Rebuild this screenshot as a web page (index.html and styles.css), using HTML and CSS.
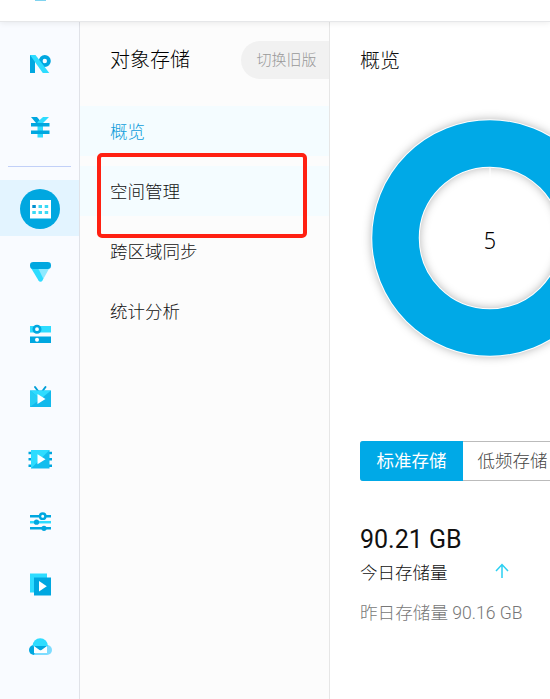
FILE: index.html
```html
<!DOCTYPE html>
<html lang="zh-CN">
<head>
<meta charset="utf-8">
<title>对象存储</title>
<link rel="stylesheet" href="styles.css">
</head>
<body>
<div class="app">
  <header class="topbar"><span class="brand"></span></header>
  <div class="body">
    <nav class="rail">
      <a class="rail-item"><svg viewBox="0 0 24 24"><path fill="#00a7e0" d="M2 3h5v18H2z"/><circle cx="16.800" cy="9" r="4.100" fill="none" stroke="#00a7e0" stroke-width="3.800"/><path fill="#2edcff" d="M2 3h5.500l13.800 18h-6.500z"/></svg></a>
      <a class="rail-item"><svg viewBox="0 0 24 24"><path fill="#00a7e0" d="M3 2h6l5 6H8z"/><path fill="#2edcff" d="M15 2h6l-6 6v14.500H9.500V7z"/><path fill="#00a7e0" d="M3 8h18.500v3.500H3zM3 15.500h18.500V19H3z"/></svg></a>
      <hr class="divider">
      <a class="rail-item active"><span class="disc"><svg viewBox="0 0 24 24"><path fill="#fff" d="M2 3h21v18.500H2z"/><path fill="#008fd0" d="M4.300 8h3.500v3H4.300z"/><path fill="#39d9f5" d="M10.500 8H14v3h-3.500zM16.700 8h3.500v3h-3.500zM4.300 14h3.500v3H4.300zM10.500 14H14v3h-3.500zM16.700 14h3.500v3h-3.500z"/></svg></span></a>
      <a class="rail-item"><svg viewBox="0 0 24 24"><path fill="#8ee9ff" d="M10 8h12l-7.500 13.500c-1 1.800-3 1.800-4 0z"/><path fill="#2edcff" d="M3 9h7l5.200 10.500c-.7 3.600-3.600 3.800-4.700 2z"/><rect x="2" y="3" width="21" height="7" rx="3.300" fill="#00a7e0"/></svg></a>
      <a class="rail-item"><svg viewBox="0 0 24 24"><path fill="#2edcff" d="M2 4h21v6.500H2z"/><path fill="#00a7e0" d="M2 14.500h21v6.500H2z"/><circle cx="9" cy="7.200" r="3.200" fill="#fff" stroke="#00a7e0" stroke-width="2.600"/><circle cx="9" cy="17.700" r="2" fill="#fff"/></svg></a>
      <a class="rail-item"><svg viewBox="0 0 24 24"><path fill="none" stroke="#009fd8" stroke-width="2" stroke-linecap="round" d="M7 2l3 4M17.500 2l-3 4"/><path fill="#12b9ec" d="M2 5.500h21V22H2z"/><path fill="#2edcff" d="M2 5.500h21L12.500 14z"/><path fill="#26cef5" d="M2 5.500L12.500 14 2 22z"/><path fill="#fff" d="M9.500 9v10l8-5z"/></svg></a>
      <a class="rail-item"><svg viewBox="0 0 24 24"><path stroke="#00a7e0" stroke-width="2.500" d="M.5 6H24M.5 12.300H24M.5 18.700H24"/><path fill="#13bdee" d="M3 3h18.500v18.500H3z"/><path fill="#2edcff" d="M3 3h18.500L3 21.500z"/><path fill="#fff" d="M9.500 7.300v10l8-5z"/></svg></a>
      <a class="rail-item"><svg viewBox="0 0 24 24"><path stroke="#00a7e0" stroke-width="2.500" d="M2 6.200h21M2 18.300h21"/><path stroke="#2edcff" stroke-width="2.500" d="M2 12.200h21"/><circle cx="14.700" cy="6.200" r="2.700" fill="#fff" stroke="#00a7e0" stroke-width="2.400"/><circle cx="8.500" cy="12.200" r="2.600" fill="#00a7e0"/><circle cx="16" cy="18.300" r="2.600" fill="#00a7e0"/></svg></a>
      <a class="rail-item"><svg viewBox="0 0 24 24"><path fill="#2edcff" d="M2 1.500h17v19H2z"/><path fill="#00a7e0" d="M6 5.500h17v18H6z"/><path fill="#fff" d="M11 9v10.400l7.800-5.200z"/></svg></a>
      <a class="rail-item"><svg viewBox="0 0 24 24"><circle cx="6" cy="15" r="5" fill="#00a7e0"/><path fill="#7edcff" d="M9 10h10a5 5 0 010 10H6z"/><path fill="#2edcff" d="M4.500 11a7.700 7.700 0 0115.400 0l-2 1H7z"/><path fill="#00a7e0" d="M6 11h13v4H6z"/><path fill="#fff" d="M6 11l6.500 4.800L19 11v7H6z"/></svg></a>
    </nav>
    <aside class="side">
      <div class="side-head"><h1>对象存储</h1><button class="legacy">切换旧版</button></div>
      <ul class="menu">
        <li class="current">概览</li>
        <li class="hover">空间管理<span class="marker"></span></li>
        <li>跨区域同步</li>
        <li>统计分析</li>
      </ul>
    </aside>
    <main class="main">
      <h2>概览</h2>
      <svg class="donut" viewBox="0 0 260 260">
        <defs><filter id="soft" x="-20%" y="-20%" width="140%" height="140%"><feGaussianBlur stdDeviation="5"/></filter></defs>
        <circle cx="130" cy="130" r="94.500" fill="none" stroke="#000" stroke-opacity=".3" stroke-width="48" filter="url(#soft)"/>
        <circle cx="130" cy="130" r="94.500" fill="none" stroke="#fff" stroke-width="48.500"/>
        <circle cx="130" cy="130" r="94.500" fill="none" stroke="#00a9e7" stroke-width="46.500"/>
        <path d="M130 60v11" stroke="#fff"/>
        <text transform="translate(130 141) scale(.9 1)" text-anchor="middle">5</text>
      </svg>
      <div class="tabs"><button class="tab selected">标准存储</button><button class="tab">低频存储</button></div>
      <div class="total">90.21 GB</div>
      <div class="today"><span>今日存储量</span><svg viewBox="0 0 14 16"><path d="M7 15V1.500M1 8l6-6.500L13 8" fill="none" stroke="#2bd0f2" stroke-width="1.500"/></svg></div>
      <div class="yesterday">昨日存储量 90.16 GB</div>
    </main>
  </div>
</div>
</body>
</html>
```
FILE: styles.css
```css
* { box-sizing: border-box; }
body { margin: 0; overflow: hidden; background: #fff; color: #111; font-family: Roboto, "Noto Sans CJK SC", sans-serif; font-weight: 300; }
h1, h2, ul { margin: 0; padding: 0; font-weight: 300; }
button { border: 0; padding: 0; font: inherit; }
.app { width: 550px; height: 699px; overflow: hidden; display: flex; flex-direction: column; }
.topbar { height: 22px; flex: none; position: relative; z-index: 1; background: #fff; border-bottom: 1px solid #e6e7e9; box-shadow: 0 1px 6px rgba(0, 0, 0, .08); }
.brand { display: block; width: 11px; height: 1px; margin-left: 35px; background: #80d3ef; }
.body { display: flex; flex: 1; min-height: 0; }
.rail { width: 80px; flex: none; padding-top: 11px; background: #f9fbff; border-right: 1px solid #e0e2e8; }
.rail-item { display: flex; align-items: center; justify-content: center; height: 62.600px; padding-left: 1px; }
.rail-item svg { display: block; width: 24px; height: 24px; }
.divider { width: 63px; height: 1px; margin: 8px 0 13px 8px; border: 0; background: #c2d0f8; }
.rail-item.active { height: 56px; margin-bottom: 4px; padding-top: 2px; background: #e3f4ff; }
.disc { display: flex; align-items: center; justify-content: center; width: 40px; height: 40px; border-radius: 50%; background: #00a7e0; }
.side { width: 250px; flex: none; background: #fcfcfc; border-right: 1px solid #e6e6e6; }
.side-head { display: flex; justify-content: space-between; align-items: center; height: 38px; margin-top: 19px; padding-left: 30px; }
.side-head h1 { font-size: 20px; line-height: 30px; color: #000; }
.legacy { width: 88px; height: 38px; padding: 0 1px 4px 4px; border-radius: 19px 0 0 19px; background: #f1f1f1; color: #999; font-size: 15px; }
.menu { margin-top: 27px; list-style: none; }
.menu li { position: relative; height: 50px; margin-bottom: 10px; padding-left: 30px; font-size: 17.500px; line-height: 52px; }
.menu .current { color: #0f9cdb; }
.menu .current, .menu .hover { background: #f4fcff; }
.marker { position: absolute; left: 16.500px; top: -13px; width: 210px; height: 85px; border: 4px solid #ff2012; border-radius: 5px; }
.main { flex: 1; min-width: 0; padding: 24px 0 0 30px; overflow: hidden; }
.main h2 { height: 30px; font-size: 20px; line-height: 30px; }
.donut { display: block; width: 260px; height: 260px; margin: 31.500px 0 0 0; }
.donut text { font-family: "Noto Sans", sans-serif; font-size: 24px; font-weight: 300; fill: #000; }
.tabs { display: flex; width: 206px; height: 40px; margin-top: 73.500px; border: 1px solid #bbb; border-left: 0; border-radius: 3px; }
.tab { flex: none; width: 99px; height: 38px; padding-bottom: 3px; background: #fff; color: #444; font-size: 17.500px; }
.tab.selected { width: 103px; height: 40px; margin-top: -1px; border-radius: 3px 0 0 3px; background: #00a9e7; color: #fff; font-weight: 400; }
.total { margin-top: 44px; font-size: 25px; line-height: 30px; font-weight: 400; }
.today { display: flex; align-items: center; height: 32px; font-size: 17.500px; }
.today svg { width: 14px; height: 16px; margin-left: 47.500px; }
.yesterday { margin-top: 13px; font-size: 17.600px; line-height: 26px; color: #777; white-space: nowrap; }
```
